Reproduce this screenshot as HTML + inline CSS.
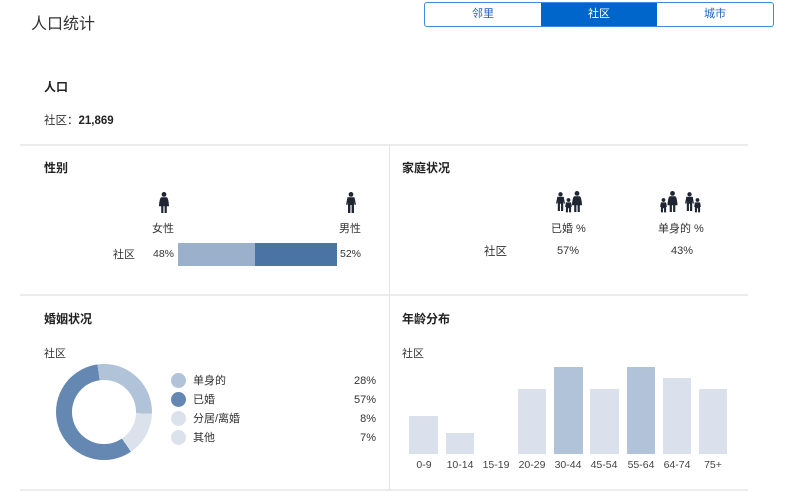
<!DOCTYPE html>
<html><head><meta charset="utf-8"><style>
*{margin:0;padding:0;box-sizing:border-box}
body{width:799px;height:501px;background:#fff;position:relative;overflow:hidden;font-family:"Liberation Sans","Noto Sans CJK SC",sans-serif;color:#222}
.a{position:absolute;white-space:nowrap}
.t{font-size:12px;font-weight:bold;color:#222}
.s{font-size:11px;color:#333}
.hl{position:absolute;height:2px;background:#ececec}
.bar{position:absolute;background:#dbe1ec}
.bar.d{background:#b1c3d8}
.lb{position:absolute;top:459px;font-size:10.5px;color:#444;width:40px;text-align:center}
.dot{position:absolute;width:15px;height:15px;border-radius:50%}
</style></head><body>
<svg width="0" height="0" style="position:absolute">
<defs>
<symbol id="m" viewBox="0 0 10 22"><circle cx="5" cy="2.4" r="2.4"/><path d="M1.5 5.2h7l1.5 7.5H8.4L8 9.5V21H5.6v-8h-1.2v8H2V9.5l-.4 3.2H0z"/></symbol>
<symbol id="f" viewBox="0 0 10 22"><circle cx="5" cy="2.4" r="2.4"/><path d="M2.4 5.2h5.2c1.5 0 2.4 6 2.4 9H7.8V21H5.6v-6.8h-1.2V21H2.2v-6.8H0c0-3 .9-9 2.4-9z"/></symbol>
<symbol id="c" viewBox="0 0 10 22"><circle cx="5" cy="3" r="2.8"/><path d="M1.2 6.5h7.6l1.2 6.5H8.8V21H5.8v-6h-1.6v6H1.2v-8H0z"/></symbol>
</defs></svg>

<div class="a" style="left:31px;top:10px;font-size:16px;color:#333">人口统计</div>
<div class="a" style="left:424px;top:2px;width:350px;height:25px;border:1px solid #3f8ae0;border-radius:3px;overflow:hidden;display:flex;font-size:11px">
<div style="flex:1;text-align:center;line-height:23px;color:#1a66c4">邻里</div>
<div style="flex:1;text-align:center;line-height:23px;background:#0066cc;color:#fff">社区</div>
<div style="flex:1;text-align:center;line-height:23px;color:#1a66c4">城市</div>
</div>

<div class="a t" style="left:44px;top:78px">人口</div>
<div class="a" style="left:44px;top:112px;font-size:11.5px;color:#333">社区：<b style="color:#222">21,869</b></div>

<div class="hl" style="left:20px;top:144px;width:728px"></div>
<div class="hl" style="left:20px;top:294px;width:728px"></div>
<div class="hl" style="left:20px;top:489px;width:728px"></div>
<div style="position:absolute;left:389px;top:145px;width:1px;height:345px;background:#e4e4e4"></div>

<!-- gender -->
<div class="a t" style="left:44px;top:159px">性别</div>
<svg class="a" style="left:159px;top:192px" width="10" height="22" fill="#1f2533"><use href="#f"/></svg>
<svg class="a" style="left:346px;top:192px" width="10" height="22" fill="#1f2533"><use href="#m"/></svg>
<div class="a s" style="left:152px;top:220px">女性</div>
<div class="a s" style="left:339px;top:220px">男性</div>
<div class="a s" style="left:113px;top:246px">社区</div>
<div class="a" style="left:153px;top:248px;font-size:10.5px;color:#333">48%</div>
<div class="a" style="left:178px;top:243px;width:77px;height:23px;background:#9bb0cb"></div>
<div class="a" style="left:255px;top:243px;width:82px;height:23px;background:#4a74a3"></div>
<div class="a" style="left:340px;top:248px;font-size:10.5px;color:#333">52%</div>

<!-- family -->
<div class="a t" style="left:402px;top:159px">家庭状况</div>
<svg class="a" style="left:556px;top:191px" width="26" height="22" fill="#1f2533"><use href="#m" x="0" width="9" height="22"/><use href="#c" x="9" y="7" width="7" height="15"/><use href="#f" x="16" width="10" height="22"/></svg>
<svg class="a" style="left:660px;top:191px" width="46" height="22" fill="#1f2533"><use href="#c" x="0" y="7" width="7" height="15"/><use href="#f" x="7.5" width="10" height="22"/><use href="#m" x="25" width="9" height="22"/><use href="#c" x="34" y="7" width="7" height="15"/></svg>
<div class="a s" style="left:551px;top:220px">已婚 %</div>
<div class="a s" style="left:658px;top:220px">单身的 %</div>
<div class="a s" style="left:484px;top:243px;font-size:11.5px">社区</div>
<div class="a s" style="left:557px;top:245px">57%</div>
<div class="a s" style="left:671px;top:245px">43%</div>

<!-- marital -->
<div class="a t" style="left:44px;top:310px">婚姻状况</div>
<div class="a s" style="left:44px;top:345px">社区</div>
<div class="a" style="left:56px;top:364px;width:96px;height:96px;border-radius:50%;background:conic-gradient(from -8deg,#b1c3d8 0 100deg,#dbe2ec 100deg 154deg,#6588b3 154deg 360deg)"></div>
<div class="a" style="left:72px;top:380px;width:64px;height:64px;border-radius:50%;background:#fff"></div>
<div class="dot" style="left:171px;top:373px;background:#b1c3d8"></div>
<div class="dot" style="left:171px;top:392px;background:#6588b3"></div>
<div class="dot" style="left:171px;top:411px;background:#dbe2ec"></div>
<div class="dot" style="left:171px;top:430px;background:#dbe2ec"></div>
<div class="a s" style="left:193px;top:372px">单身的</div>
<div class="a s" style="left:193px;top:391px">已婚</div>
<div class="a s" style="left:193px;top:410px">分居/离婚</div>
<div class="a s" style="left:193px;top:429px">其他</div>
<div class="a s" style="left:336px;top:375px;width:40px;text-align:right">28%</div>
<div class="a s" style="left:336px;top:394px;width:40px;text-align:right">57%</div>
<div class="a s" style="left:336px;top:413px;width:40px;text-align:right">8%</div>
<div class="a s" style="left:336px;top:432px;width:40px;text-align:right">7%</div>

<!-- age -->
<div class="a t" style="left:402px;top:310px">年龄分布</div>
<div class="a s" style="left:402px;top:345px">社区</div>
<div class="bar" style="left:409px;top:416px;width:29px;height:38px"></div>
<div class="bar" style="left:446px;top:433px;width:28px;height:21px"></div>
<div class="bar" style="left:518px;top:389px;width:28px;height:65px"></div>
<div class="bar d" style="left:554px;top:367px;width:29px;height:87px"></div>
<div class="bar" style="left:590px;top:389px;width:29px;height:65px"></div>
<div class="bar d" style="left:627px;top:367px;width:28px;height:87px"></div>
<div class="bar" style="left:663px;top:378px;width:28px;height:76px"></div>
<div class="bar" style="left:699px;top:389px;width:28px;height:65px"></div>
<div class="lb" style="left:404px">0-9</div>
<div class="lb" style="left:440px">10-14</div>
<div class="lb" style="left:476px">15-19</div>
<div class="lb" style="left:512px">20-29</div>
<div class="lb" style="left:548px">30-44</div>
<div class="lb" style="left:584px">45-54</div>
<div class="lb" style="left:621px">55-64</div>
<div class="lb" style="left:657px">64-74</div>
<div class="lb" style="left:693px">75+</div>
</body></html>
